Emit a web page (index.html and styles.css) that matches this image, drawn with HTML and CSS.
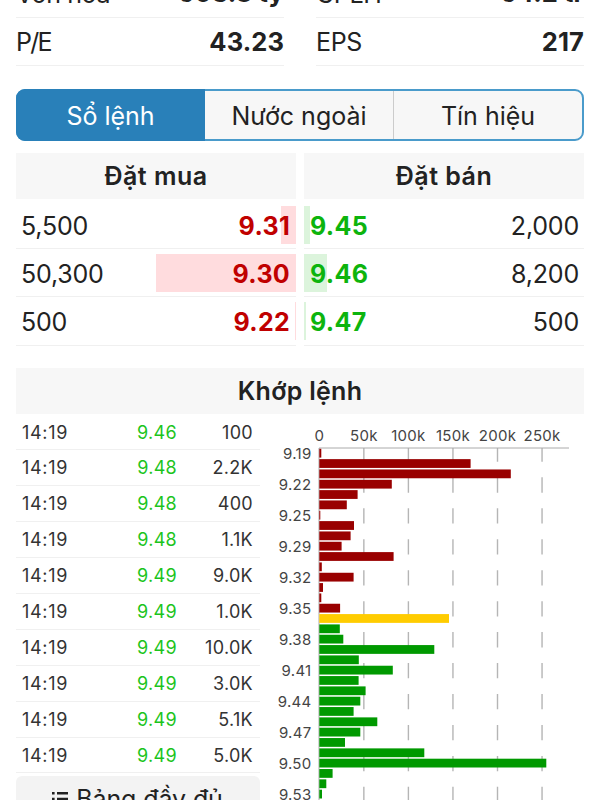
FILE: index.html
```html
<!DOCTYPE html>
<html lang="vi">
<head>
    <meta charset="utf-8">
    <title>Sổ lệnh</title>
    <link rel="stylesheet" href="styles.css">
</head>
<body>
    <div class="page">
        <div class="stats">
            <div class="stat"><span>Vốn hoá</span><b>603.8 tỷ</b></div>
            <div class="stat"><span>CPLH</span><b>64.2 tr</b></div>
            <div class="stat"><span class="tight">P/E</span><b>43.23</b></div>
            <div class="stat"><span>EPS</span><b>217</b></div>
        </div>

        <div class="tabs">
            <div class="tab active">Sổ lệnh</div>
            <div class="tab">Nước ngoài</div>
            <div class="tab">Tín hiệu</div>
        </div>

        <!-- Order book -->
        <div class="book">
            <div class="side buy">
                <h2>Đặt mua</h2>
                <div class="order"><span>5,500</span><div class="depth" style="width: 15px"></div><b>9.31</b></div>
                <div class="order"><span>50,300</span><div class="depth" style="width: 140px"></div><b>9.30</b></div>
                <div class="order"><span>500</span><div class="depth" style="width: 1.5px"></div><b>9.22</b></div>
            </div>
            <div class="side sell">
                <h2>Đặt bán</h2>
                <div class="order"><div class="depth" style="width: 6px"></div><b>9.45</b><span>2,000</span></div>
                <div class="order"><div class="depth" style="width: 23px"></div><b>9.46</b><span>8,200</span></div>
                <div class="order"><div class="depth" style="width: 1.5px"></div><b>9.47</b><span>500</span></div>
            </div>
        </div>

        <!-- Matched orders -->
        <h2 class="matched-title">Khớp lệnh</h2>
        <div class="matched">
            <div class="trades">
                <div class="trade"><span>14:19</span><span class="up">9.46</span><span class="vol">100</span></div>
                <div class="trade"><span>14:19</span><span class="up">9.48</span><span class="vol">2.2K</span></div>
                <div class="trade"><span>14:19</span><span class="up">9.48</span><span class="vol">400</span></div>
                <div class="trade"><span>14:19</span><span class="up">9.48</span><span class="vol">1.1K</span></div>
                <div class="trade"><span>14:19</span><span class="up">9.49</span><span class="vol">9.0K</span></div>
                <div class="trade"><span>14:19</span><span class="up">9.49</span><span class="vol">1.0K</span></div>
                <div class="trade"><span>14:19</span><span class="up">9.49</span><span class="vol">10.0K</span></div>
                <div class="trade"><span>14:19</span><span class="up">9.49</span><span class="vol">3.0K</span></div>
                <div class="trade"><span>14:19</span><span class="up">9.49</span><span class="vol">5.1K</span></div>
                <div class="trade"><span>14:19</span><span class="up">9.49</span><span class="vol">5.0K</span></div>
                <div class="more">
                    <svg width="18" height="16" viewBox="0 0 18 16">
                        <path d="M6 2.2H17M6 8H17M6 13.8H17M1 2.2H3.6M1 8H3.6M1 13.8H3.6" stroke="#222" stroke-width="2.4"/>
                    </svg>
                    <span>Bảng đầy đủ</span>
                </div>
            </div>
            <svg id="chart" class="chart" width="325" height="386" viewBox="0 0 325 386"></svg>
        </div>
    </div>

    <script src="chart.js"></script>
</body>
</html>
```

FILE: styles.css
```css
* {
    box-sizing: border-box;
}

body {
    margin: 0;
    height: 800px;
    overflow: hidden;
    background: #fff;
    color: #222;
    font-family: Inter, 'Liberation Sans', sans-serif;
    font-size: 25px;
}

.page {
    padding: 0 16px;
    margin-top: -31px;
}

.stats {
    display: grid;
    grid-template-columns: 268px 268px;
    column-gap: 32px;
}

.stat {
    display: flex;
    align-items: center;
    justify-content: space-between;
    height: 48.5px;
    padding-top: 2px;
    border-bottom: 1px solid #f0f0f0;
    letter-spacing: -0.4px;
}

.stat b {
    margin-top: -2px;
    font-size: 25.5px;
    letter-spacing: 0.1px;
}

.stat .tight {
    letter-spacing: -1.7px;
}

.tabs {
    display: flex;
    height: 52px;
    margin-top: 23px;
    border: 2px solid #4a9bcb;
    border-radius: 9px;
    background: #f7f7f7;
}

.tab {
    flex: 1;
    display: flex;
    align-items: center;
    justify-content: center;
    padding-top: 1px;
    border-left: 1px solid #ccc;
}

.tab.active {
    flex: none;
    width: 189px;
    margin: -2px 0 -2px -2px;
    border: none;
    border-radius: 9px 0 0 9px;
    background: #2980b9;
    color: #fff;
}

.tab.active + .tab {
    border-left: none;
}

h2 {
    display: flex;
    align-items: center;
    justify-content: center;
    height: 46px;
    margin: 0;
    background: #f7f7f7;
    font-size: 25px;
    font-weight: 600;
    letter-spacing: 0.3px;
}

.book {
    display: grid;
    grid-template-columns: 280px 280px;
    justify-content: space-between;
    margin-top: 12px;
}

.side {
    padding-bottom: 1px;
}

.side h2 {
    margin-bottom: 2px;
    letter-spacing: 0.5px;
}

.order {
    display: flex;
    align-items: center;
    position: relative;
    height: 48.2px;
    padding: 3px 5px 0;
    border-bottom: 1px solid #f0f0f0;
    justify-content: space-between;
    letter-spacing: -0.2px;
}

.order b,
.order span {
    position: relative;
}

.order b {
    letter-spacing: 0.3px;
}

.buy .order {
    padding-right: 6px;
}

.sell .order {
    padding-left: 6px;
}

.depth {
    position: absolute;
    top: 5px;
    height: 38px;
}

.buy .depth {
    right: 0;
    background: #ffdcde;
}

.sell .depth {
    left: 0;
    background: #dcf4dc;
}

.buy b {
    color: #c00000;
}

.sell b {
    color: #0db40d;
}

.matched-title {
    margin-top: 21px;
}

.matched {
    display: flex;
    height: 386px;
}

.trades {
    width: 244px;
    flex: none;
    padding-top: 1px;
    font-size: 18px;
    letter-spacing: 0.3px;
    color: #333;
}

.trade {
    display: grid;
    grid-template-columns: 70px 85px 1fr;
    align-items: center;
    height: 35.9px;
    padding: 0 7px 0 6px;
    border-bottom: 1px solid #f0f0f0;
}

.trade span:first-child {
    letter-spacing: 0.7px;
}

.trade .up {
    color: #1cc41c;
    text-align: right;
}

.trade .vol {
    text-align: right;
}

.more {
    display: flex;
    justify-content: center;
    align-items: center;
    gap: 7px;
    height: 46px;
    margin-top: 3px;
    padding-right: 2px;
    border-radius: 6px;
    background: #f3f3f3;
    color: #222;
    font-size: 25px;
    letter-spacing: -0.1px;
}

.chart {
    flex: none;
    font-size: 15px;
    letter-spacing: 0.3px;
    fill: #444;
}
```

FILE: chart.js
```javascript
var chart = document.getElementById('chart');
var originX = 59.3; // x of the zero line
var originY = 34; // y of the top axis
var step = 10.33; // Distance between two bars
var tick = 44.55; // Width of 50k

// Bar lengths from the lowest price to the highest
var bars = [2, 151.3, 191.5, 72.5, 38.3, 27.5, 1, 34.7, 31.3, 22.3, 74.3, 2.5, 34.3, 3.7, 2, 20.8,
    129.7, 20.5, 24, 115, 39.5, 73.5, 39.3, 46.3, 41, 34.3, 58, 41, 25.7, 105, 227, 13.3, 7, 2.7];
var prices = ['9.19', '9.22', '9.25', '9.29', '9.32', '9.35', '9.38', '9.41', '9.44', '9.47', '9.50', '9.53'];
var volumes = ['0', '50k', '100k', '150k', '200k', '250k'];
var svg = '';

// Grid lines and labels on top
volumes.forEach(function(label, i) {
    var x = originX + i * tick;
    if (i > 0) {
        svg += '<line x1="' + x + '" x2="' + x + '" y1="' + originY + '" y2="386" stroke="#b5b5b5" stroke-width="1.4" stroke-dasharray="15.3 15.65" stroke-dashoffset="1.6"/>';
    }
    svg += '<text x="' + x + '" y="27" text-anchor="middle">' + label + '</text>';
});

svg += '<line x1="59" x2="309" y1="34" y2="34" stroke="#aaa"/>';
svg += '<line x1="59" x2="59" y1="34" y2="386" stroke="#aaa"/>';

bars.forEach(function(width, i) {
    var color = i < 16 ? '#990000' : i === 16 ? '#ffcc00' : '#009900';
    svg += '<rect x="' + originX + '" y="' + (originY + 0.8 + i * step) + '" width="' + width + '" height="8.8" fill="' + color + '"/>';
});

prices.forEach(function(label, i) {
    svg += '<text x="51.5" y="' + (originY + 11 + i * step * 3) + '" text-anchor="end">' + label + '</text>';
});

chart.innerHTML = svg;
```
